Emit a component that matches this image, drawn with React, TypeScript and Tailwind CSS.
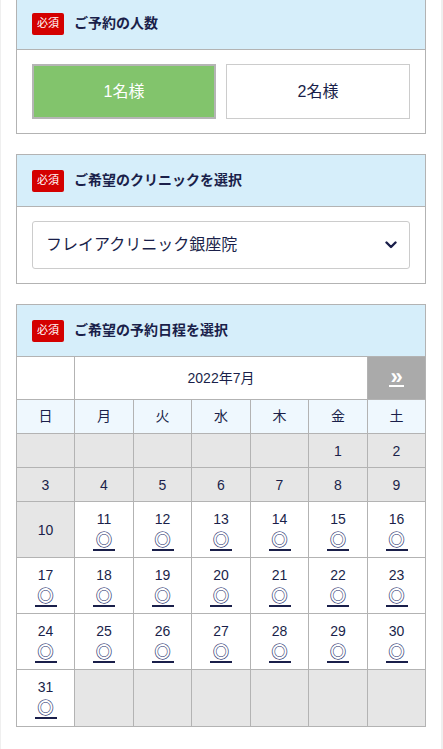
import React from "react";

const NAVY = "text-[#1a1f4a]";

function Badge() {
  return (
    <span className="flex h-[22px] w-[32px] items-center justify-center rounded-[2px] bg-[#d40000] text-[11px] leading-none text-white">
      必須
    </span>
  );
}

function Header({ title, full }: { title: string; full?: boolean }) {
  return (
    <div
      className={
        "flex items-center gap-[10px] bg-[#d6eefa] px-[15px] " +
        (full ? "h-[53px] border border-[#b3b3b3]" : "h-[52px] border-b border-[#b3b3b3]")
      }
    >
      <Badge />
      <span className={"text-[14px] font-bold " + NAVY}>{title}</span>
    </div>
  );
}

type Day = { d?: number; past?: boolean };

const rows: Day[][] = [
  [{}, {}, {}, {}, {}, { d: 1, past: true }, { d: 2, past: true }],
  [3, 4, 5, 6, 7, 8, 9].map((d) => ({ d, past: true })),
  [{ d: 10, past: true }, ...[11, 12, 13, 14, 15, 16].map((d) => ({ d }))],
  [17, 18, 19, 20, 21, 22, 23].map((d) => ({ d })),
  [24, 25, 26, 27, 28, 29, 30].map((d) => ({ d })),
  [{ d: 31 }, {}, {}, {}, {}, {}, {}],
];

const rowH = ["h-[34px]", "h-[34px]", "h-[56px]", "h-[56px]", "h-[56px]", "h-[57px]"];

export default function App() {
  return (
    <div className="min-h-screen bg-[#efefef]" style={{ fontFamily: '"Liberation Sans", Arial, "Noto Sans CJK JP", sans-serif' }}>
      <div className="ml-px min-h-screen w-[440px] bg-white px-[15px] pb-[22px]">
        <div className="-mt-[3px]">
          {/* Panel 1 */}
          <div className="mb-[20px] border border-[#b3b3b3]">
            <Header title="ご予約の人数" />
            <div className="flex gap-[10px] px-[15px] py-[14px]">
              <button className="flex h-[55px] w-[184px] items-center justify-center border-2 border-[#b5b5b5] bg-[#82c46c] text-[16px] text-white">
                1名様
              </button>
              <button className={"flex h-[55px] w-[184px] items-center justify-center border border-[#cccccc] bg-white text-[16px] " + NAVY}>
                2名様
              </button>
            </div>
          </div>

          {/* Panel 2 */}
          <div className="mb-[20px] border border-[#b3b3b3]">
            <Header title="ご希望のクリニックを選択" />
            <div className="px-[15px] py-[14px]">
              <div className={"flex h-[48px] items-center justify-between rounded-[3px] border border-[#cccccc] pl-[13px] pr-[12px] text-[16px] " + NAVY}>
                <span>フレイアクリニック銀座院</span>
                <svg width="12" height="8" viewBox="0 0 12 8" fill="none">
                  <path d="M1.5 1.5 L6 6 L10.5 1.5" stroke="#1a1f4a" strokeWidth="2.4" strokeLinecap="round" strokeLinejoin="round" />
                </svg>
              </div>
            </div>
          </div>

          {/* Panel 3 */}
          <div>
            <Header title="ご希望の予約日程を選択" full />
            <div className={"grid grid-cols-[58px_59px_58px_59px_58px_59px_58px] border-l border-[#b3b3b3] text-[14px] " + NAVY}>
              <div className="h-[43px] border-b border-r border-[#b3b3b3] bg-white" />
              <div className="col-span-5 flex h-[43px] items-center justify-center border-b border-r border-[#b3b3b3] bg-white">
                2022年7月
              </div>
              <div className="flex h-[43px] items-center justify-center border-b border-r border-[#b3b3b3] bg-[#aaaaaa]">
                <span className="border-b-2 border-white px-[1px] text-[22px] font-bold leading-[16px] text-white">»</span>
              </div>
              {["日", "月", "火", "水", "木", "金", "土"].map((w) => (
                <div key={w} className="flex h-[34px] items-center justify-center border-b border-r border-[#b3b3b3] bg-[#eff8fe]">
                  {w}
                </div>
              ))}
              {rows.map((r, ri) =>
                r.map((c, ci) => {
                  const gray = c.d === undefined || c.past;
                  return (
                    <div
                      key={ri + "-" + ci}
                      className={
                        "flex flex-col items-center border-b border-r border-[#b3b3b3] " +
                        rowH[ri] +
                        " " +
                        (gray ? "justify-center bg-[#e6e6e6]" : "bg-white pt-[7px]")
                      }
                    >
                      {c.d !== undefined && <span className="leading-[20px]">{c.d}</span>}
                      {c.d !== undefined && !c.past && (
                        <span
                          className="mt-[1px] inline-block w-[22px] border-b-2 border-[#1a1f4a] pb-[2px] text-center text-[17px] leading-[17px] text-[#1a2a6a]"
                          style={{ fontFamily: '"Noto Sans CJK JP", sans-serif' }}
                        >
                          ◎
                        </span>
                      )}
                    </div>
                  );
                })
              )}
            </div>
          </div>
        </div>
      </div>
    </div>
  );
}
